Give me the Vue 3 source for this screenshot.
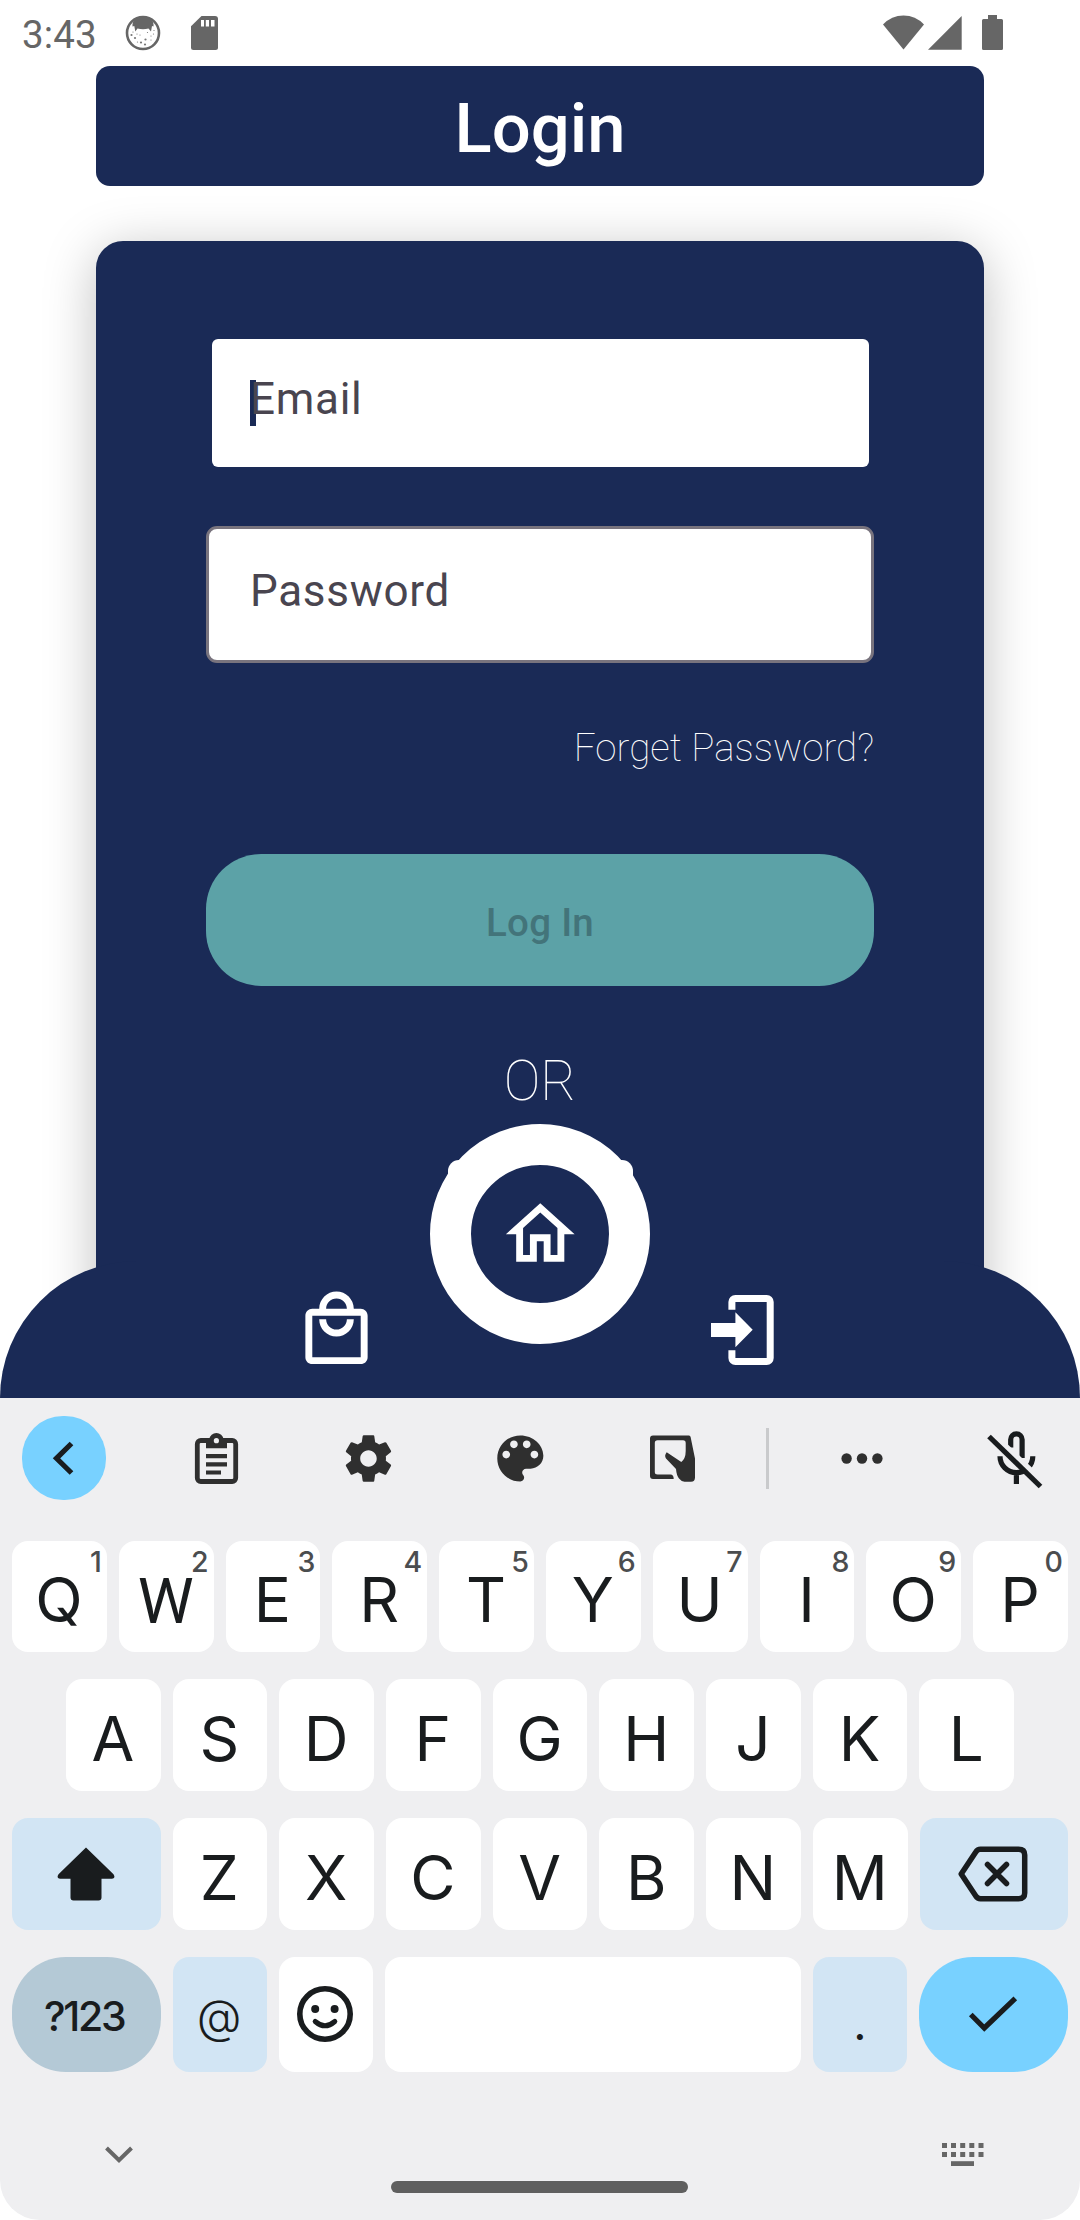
<script setup>
const numberRow = 'QWERTYUIOP'.split('').map((letter, i) => ({ letter, hint: (i + 1) % 10 }))
const homeRow = 'ASDFGHJKL'.split('')
const lastRow = 'ZXCVBNM'.split('')
const dotColumns = [0, 9, 18.2, 27.3, 36.5]
const freckles = [
  [8, 17], [10, 23], [15, 20], [22.5, 17.5], [20.5, 24.5], [26, 21], [12, 19],
  [16, 27.500], [26, 25], [28.500, 19], [20, 29.500], [12.500, 27], [29, 15.500], [6.500, 20]
]
</script>

<template>
  <div class="phone">
    <section class="screen">
      <div class="status">
        <span class="clock">3:43</span>
        <svg class="cat" width="36" height="36" viewBox="0 0 36 36">
          <circle cx="18" cy="18" r="16" fill="#fff" stroke="#666" stroke-width="2.6" />
          <path d="M7.500 11.500Q7 7 10 4.500Q18 0 26 4.500Q29 7 28.500 11.500L27 11L26 16.500L23.500 13.500Q18 15 12.500 13.500L10.300 16.500L9.300 11Z" fill="#666" />
          <circle v-for="(f, i) in freckles" :key="i" :cx="f[0]" :cy="f[1]" :r="i % 3 === 1 ? 1.1 : 0.6" fill="#777" />
        </svg>
        <svg class="sd" width="27" height="34" viewBox="0 0 27 34">
          <path d="M10.500 0H24a3 3 0 0 1 3 3V31.500a2.500 2.500 0 0 1-2.500 2.500H2.500A2.500 2.500 0 0 1 0 31.500V10.200Z" fill="#666" />
          <path d="M10 4h3v6.500h-3zM14.800 4h3.200v6.500h-3.200zM20 4h3.500v6.500H20z" fill="#fff" />
        </svg>
        <svg class="signals" width="121" height="36" viewBox="0 0 121 36">
          <g fill="#666">
            <path d="M0 9.500Q8.500 .5 20.500 .5T41 9.500L20.500 34.500Z" />
            <path d="M45 34.800L78.700 1V34.800Z" />
            <path d="M105 0h9v4h4.500a1.500 1.500 0 0 1 1.500 1.500V33.500a1.500 1.500 0 0 1-1.500 1.500H100.500a1.500 1.500 0 0 1-1.500-1.500V5.500a1.500 1.500 0 0 1 1.500-1.500H105z" />
          </g>
        </svg>
      </div>

      <h1 class="title">Login</h1>

      <main class="card">
        <div class="field email"><span class="caret"></span><span class="label">Email</span></div>
        <div class="field password">Password</div>
        <a class="forgot">Forget Password?</a>
        <div class="submit">Log In</div>
        <div class="or">OR</div>
        <div class="provider"></div>
      </main>

      <nav class="nav">
        <svg class="bag" width="83" height="83" viewBox="0 0 24 24" fill="#fff">
          <path d="M19 6h-2c0-2.760-2.240-5-5-5S7 3.240 7 6H5c-1.100 0-2 .9-2 2v12c0 1.100.9 2 2 2h14c1.100 0 2-.9 2-2V8c0-1.100-.9-2-2-2zm-7-3c1.660 0 3 1.340 3 3H9c0-1.660 1.340-3 3-3zm7 17H5V8h14v12zm-7-8c-1.660 0-3-1.340-3-3H7c0 2.760 2.240 5 5 5s5-2.240 5-5h-2c0 1.660-1.340 3-3 3z" />
        </svg>
        <svg class="enter" width="63" height="70" viewBox="0 0 63 70">
          <path d="M20.900 14.700V7a3.500 3.500 0 0 1 3.500-3.500H55.700a3.500 3.500 0 0 1 3.500 3.500V63a3.500 3.500 0 0 1-3.500 3.500H24.400a3.500 3.500 0 0 1-3.500-3.500V55.300" fill="none" stroke="#fff" stroke-width="7" />
          <path d="M0 27.900H24.400V17.300L41.700 34.700L24.400 52.300V41.900H0Z" fill="#fff" />
        </svg>
        <div class="home">
          <svg width="82.500" height="82.500" viewBox="0 0 24 24" fill="#fff">
            <path d="M12 5.690l5 4.500V18h-2v-6H9v6H7v-7.810l5-4.500M12 3L2 12h3v8h6v-6h2v6h6v-8h3L12 3z" />
          </svg>
        </div>
      </nav>
    </section>

    <section class="keyboard">
      <div class="tools">
        <svg class="tool back" viewBox="0 0 84 84">
          <path d="M49.500 27.500L34.500 42.300L49.500 57" fill="none" stroke="#191c1e" stroke-width="5.200" />
        </svg>
        <svg class="tool" viewBox="0 0 84 84">
          <rect x="23.300" y="24.500" width="38.400" height="41" rx="3.500" fill="none" stroke="#2f2f2f" stroke-width="4.800" />
          <path d="M32 23h3.200a7.300 7.300 0 0 1 14.400 0H53v9.200H32z" fill="#2f2f2f" />
          <circle cx="42.400" cy="24.700" r="2.600" fill="#efeff1" />
          <path d="M32 38h21v4.200H32zM32 46.200h21v4.200H32zM32 54.400h15v4.200H32z" fill="#2f2f2f" />
        </svg>
        <svg class="tool" viewBox="0 0 84 84">
          <path transform="translate(13.300 13.300) scale(2.430)" fill="#2f2f2f" d="M19.140 12.940c.04-.3.060-.61.060-.94 0-.32-.02-.64-.07-.94l2.030-1.580c.18-.14.230-.41.120-.61l-1.920-3.320c-.12-.22-.37-.29-.59-.22l-2.390.96c-.5-.38-1.030-.7-1.620-.94l-.36-2.540c-.04-.24-.24-.41-.48-.41h-3.840c-.24 0-.43.17-.47.41l-.36 2.540c-.59.24-1.130.57-1.620.94l-2.390-.96c-.22-.08-.47 0-.59.22L2.740 8.870c-.12.21-.08.47.12.61l2.030 1.580c-.05.3-.09.63-.09.94s.02.64.07.94l-2.030 1.580c-.18.14-.23.41-.12.61l1.920 3.320c.12.220.37.290.59.220l2.390-.96c.5.380 1.030.7 1.620.94l.36 2.540c.05.240.24.410.48.410h3.840c.24 0 .44-.17.470-.41l.36-2.540c.59-.24 1.130-.56 1.620-.94l2.390.96c.22.080.47 0 .59-.22l1.920-3.320c.12-.22.070-.47-.12-.61l-2.010-1.580zM12 15.400c-1.880 0-3.400-1.520-3.400-3.400s1.520-3.400 3.400-3.400 3.400 1.520 3.400 3.400-1.520 3.400-3.400 3.400z" />
        </svg>
        <svg class="tool" viewBox="0 0 84 84">
          <path transform="translate(11.600 11.700) scale(2.560)" fill="#2f2f2f" d="M12 3c-4.970 0-9 4.030-9 9s4.030 9 9 9c.83 0 1.500-.67 1.500-1.500 0-.39-.15-.74-.39-1.010-.23-.26-.38-.61-.38-.99 0-.83.67-1.500 1.500-1.500H16c2.760 0 5-2.240 5-5 0-4.420-4.030-8-9-8zm-5.500 9c-.83 0-1.500-.67-1.500-1.500S5.670 9 6.500 9 8 9.670 8 10.500 7.330 12 6.500 12zm3-4C8.670 8 8 7.330 8 6.500S8.670 5 9.500 5s1.500.67 1.500 1.500S10.330 8 9.500 8zm5 0c-.83 0-1.500-.67-1.500-1.500S13.670 5 14.500 5s1.500.67 1.500 1.500S15.330 8 14.500 8zm3 4c-.83 0-1.500-.67-1.500-1.500S16.670 9 17.500 9s1.500.67 1.500 1.500-.67 1.500-1.500 1.500z" />
        </svg>
        <svg class="tool" viewBox="0 0 84 84">
          <path fill="#2f2f2f" fill-rule="evenodd" d="M23 19.500H59Q60.300 19.500 60.600 21L65 42.500V61.500Q65 65.700 61 65.700H54.500Q51.500 65.700 49 62.500T46 53L36 42.500Q34 39.500 36.700 36.200L51.300 46Q55.700 42.500 55.700 35V27Q55.700 24.300 53 24.300H27.500Q24.800 24.300 24.800 27V56Q24.800 58.500 27.500 58.500H40.500Q43.700 58.700 43.700 63H23Q20 63 20 60V22.500Q20 19.500 23 19.500Z" />
        </svg>
        <span class="divider"></span>
        <svg class="tool" viewBox="0 0 84 84" fill="#2f2f2f">
          <circle cx="26.600" cy="42.500" r="5.200" /><circle cx="42" cy="42.500" r="5.200" /><circle cx="57.400" cy="42.500" r="5.200" />
        </svg>
        <svg class="tool" viewBox="0 0 84 84" fill="none" stroke="#191c1e" stroke-width="5.200">
          <path d="M38.700 31.500V23.600a5.700 5.700 0 0 1 11.400 0V42" />
          <path d="M28 40.300a16.400 16.400 0 0 0 32.800 0M44.400 56V68" />
          <path d="M20.500 17.500L72.500 67.500" stroke="#efeff1" stroke-width="5.500" />
          <path d="M17 20.500L68.500 70.500" />
        </svg>
      </div>

      <div class="row first">
        <div v-for="k in numberRow" :key="k.letter" class="key" :class="{ broad: k.letter === 'W' }">{{ k.letter }}<span class="hint">{{ k.hint }}</span></div>
      </div>
      <div class="row second">
        <div v-for="k in homeRow" :key="k" class="key">{{ k }}</div>
      </div>
      <div class="row third">
        <div class="key wide tint">
          <svg width="60" height="56" viewBox="0 0 60 56">
            <path d="M30 1.500L57.500 28.200Q60 32 56 32.700H45.500V51.500Q45.500 54.500 42.500 54.500H17.500Q14.500 54.500 14.500 51.500V32.700H4Q0 32 2.500 28.200Z" fill="#191c1e" />
          </svg>
        </div>
        <div v-for="k in lastRow" :key="k" class="key">{{ k }}</div>
        <div class="key wide tint">
          <svg width="70" height="56" viewBox="0 0 70 56" fill="none" stroke="#191c1e" stroke-width="5.500" stroke-linejoin="round">
            <path d="M22.500 3.300H60.500Q66.700 3.300 66.700 9V47Q66.700 52.700 60.500 52.700H22.500Q19.500 52.700 17.800 50L3.200 28L17.800 6Q19.500 3.300 22.500 3.300Z" />
            <path d="M29.500 18.500L48.500 37.500M48.500 18.500L29.500 37.500" stroke-linecap="round" />
          </svg>
        </div>
      </div>
      <div class="row fourth">
        <div class="key wide symbols">?123</div>
        <div class="key tint at">@</div>
        <div class="key smile">
          <svg width="58" height="58" viewBox="0 0 58 58">
            <circle cx="29" cy="29" r="25.200" fill="none" stroke="#191c1e" stroke-width="5.600" />
            <circle cx="19.200" cy="24" r="4" fill="#191c1e" /><circle cx="38.600" cy="24" r="4" fill="#191c1e" />
            <path d="M19.200 36.500Q29 45 38.800 36.500" fill="none" stroke="#191c1e" stroke-width="5" stroke-linecap="round" />
          </svg>
        </div>
        <div class="key space"></div>
        <div class="key tint dot">.</div>
        <div class="key wide done">
          <svg width="50" height="40" viewBox="0 0 50 40">
            <path d="M2.800 19.500L16.300 33L47.300 3.300" fill="none" stroke="#191c1e" stroke-width="5.200" />
          </svg>
        </div>
      </div>

      <footer class="system">
        <svg class="hide" width="28" height="18" viewBox="0 0 28 18">
          <path d="M1.500 2L14 14.300L26.500 2" fill="none" stroke="#666" stroke-width="4" />
        </svg>
        <span class="handle"></span>
        <svg class="switch" width="42" height="24" viewBox="0 0 42 24" fill="#666">
          <g v-for="x in dotColumns" :key="x">
            <rect :x="x" y="0" width="5" height="5" /><rect :x="x" y="9" width="5" height="5" />
          </g>
          <rect x="9" y="18.200" width="23" height="4.800" />
        </svg>
      </footer>
    </section>
  </div>
</template>

<style>
body { margin: 0; background: #fff; }
</style>

<style scoped>
.phone { width: 1080px; height: 2220px; background: #fff; font-family: Roboto, sans-serif; overflow: hidden; }
.phone * { box-sizing: border-box; }
svg { display: block; flex: none; }
.screen { position: relative; height: 1398px; overflow: hidden; display: flex; flex-direction: column; align-items: center; }
.status { width: 100%; height: 66px; flex: none; display: flex; padding: 15px 76px 0 22px; color: #666; }
.clock { width: 103px; font-size: 38.5px; line-height: 40px; letter-spacing: 0.1px; }
.sd { margin: 1px 0 0 30px; }
.signals { margin-left: auto; }
.title { width: 888px; height: 120px; flex: none; margin: 0; padding-top: 5px; border-radius: 14px; background: #1a2a56; color: #fff; font-size: 68.75px; font-weight: 500; line-height: 115px; text-align: center; }
.card { width: 888px; height: 1300px; flex: none; margin-top: 55px; padding: 98px 110px 0; border-radius: 27px; background: #1a2a56; box-shadow: 0 9px 52px rgba(0, 0, 0, 0.25); display: flex; flex-direction: column; align-items: center; }
.field { background: #fff; color: #49454f; font-size: 44px; letter-spacing: 0.7px; flex: none; }
.email { position: relative; width: 657px; height: 127.5px; margin-top: 0.3px; border-radius: 6px; padding-left: 38.5px; line-height: 121.5px; }
.label { position: relative; }
.caret { position: absolute; left: 38.5px; top: 41px; width: 6px; height: 46px; background: #1a2a56; }
.password { width: 668px; height: 137px; margin-top: 59.2px; border: 3px solid #79747e; border-radius: 11px; padding-left: 41px; line-height: 124.5px; }
.forgot { align-self: flex-end; margin-top: 62px; font-size: 38.5px; font-weight: 100; line-height: 46px; letter-spacing: 0.05px; color: #fff; }
.submit { width: 668px; height: 132px; flex: none; margin-top: 83px; padding-top: 6px; border-radius: 55px; background: #5ca2a7; color: #43747a; font-size: 38.5px; font-weight: 500; line-height: 126px; letter-spacing: 0.3px; text-align: center; }
.or { margin-top: 63px; font-size: 55px; font-weight: 100; line-height: 64px; color: #fff; }
.provider { width: 185px; height: 60px; flex: none; margin-top: 47px; border-radius: 11px; background: #fff; }
.nav { position: absolute; left: 0; right: 0; bottom: 0; height: 137px; border-radius: 137px 137px 0 0; background: #1a2a56; display: flex; justify-content: space-between; align-items: flex-start; padding: 27px 306px 0 295px; }
.enter { margin-top: 7px; }
.home { position: absolute; left: 430px; top: -137px; width: 220px; height: 220px; border: 41px solid #fff; border-radius: 50%; background: #1a2a56; display: flex; align-items: center; justify-content: center; }
.keyboard { height: 822px; background: #efeff1; border-radius: 0 0 40px 40px; padding: 18px 12px 0; color: #191c1e; font-family: Inter, sans-serif; display: flex; flex-direction: column; }
.tools { display: flex; gap: 68px; margin-left: 10px; height: 84px; flex: none; }
.tool { width: 84px; height: 84px; }
.back { border-radius: 41px; background: #78d1ff; }
.divider { width: 3px; height: 61px; margin: 12px -17.5px 0 -16px; background: #c9cacc; flex: none; }
.row { display: flex; gap: 12px; flex: none; margin-top: 27px; height: 112px; }
.first { margin-top: 41px; height: 111px; }
.second { padding: 0 54px; }
.fourth { height: 115px; }
.key { position: relative; flex: 1 1 0; min-width: 0; display: flex; align-items: center; justify-content: center; padding: 8px 1px 0 0; border-radius: 16px; background: #fff; font-size: 62px; line-height: 1; }
.first .key { padding-top: 7px; }
.first .broad { font-family: Roboto, sans-serif; font-size: 63px; padding-top: 9px; }
.hint { position: absolute; right: 5px; top: 5px; font-family: Inter, sans-serif; font-size: 28.5px; line-height: 32px; font-weight: 500; color: #4b4d4f; }
.wide { flex: 0 0 148.5px; }
.tint { background: #d2e5f4; }
.third .wide { padding-top: 0; }
.fourth .key { padding-top: 0; }
.fourth .symbols { border-radius: 54px; background: #b4c9d6; font-size: 41px; font-weight: 500; letter-spacing: -2.3px; padding: 4px 4px 0 0; }
.fourth .at { font-size: 46px; font-weight: 300; padding-top: 3px; }
.fourth .smile { padding-bottom: 2px; }
.fourth .space { flex: 0 0 416px; }
.fourth .dot { font-size: 46px; padding-top: 16px; }
.fourth .done { border-radius: 54px; background: #78d1ff; }
.system { display: flex; justify-content: space-between; align-items: flex-start; margin-top: 71px; padding: 0 84px 0 93px; }
.hide { margin-top: 3px; }
.handle { width: 297px; height: 12px; margin-top: 38px; margin-left: 4px; border-radius: 6px; background: #5f5f5f; }
</style>
